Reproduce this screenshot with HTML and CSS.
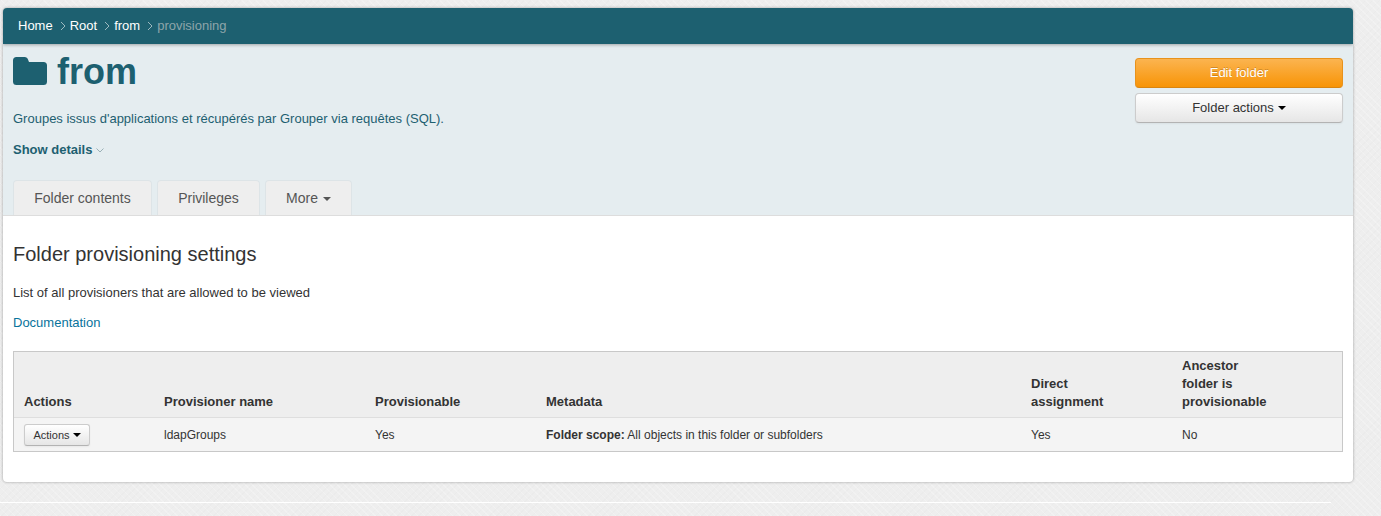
FILE: index.html
```html
<!DOCTYPE html>
<html lang="en">
<head>
<meta charset="utf-8">
<title>Folder provisioning settings</title>
<link rel="stylesheet" href="styles.css">
</head>
<body>
<main class="card">
  <nav class="crumbs">
    <a>Home</a>
    <svg class="sep" viewBox="0 0 6 10"><path d="M1 1l4 4-4 4"/></svg>
    <a>Root</a>
    <svg class="sep" viewBox="0 0 6 10"><path d="M1 1l4 4-4 4"/></svg>
    <a>from</a>
    <svg class="sep" viewBox="0 0 6 10"><path d="M1 1l4 4-4 4"/></svg>
    <span class="current">provisioning</span>
  </nav>
  <header class="head">
    <div class="head-top">
      <div class="head-main">
        <h1 class="title">
          <svg class="folder" viewBox="0 0 34 28"><path d="M3.5 0h8c2 0 3 1 3.5 2.500L16 5h14.500A3.500 3.500 0 0 1 34 8.500v16a3.500 3.500 0 0 1-3.500 3.500h-27A3.500 3.500 0 0 1 0 24.500v-21A3.500 3.500 0 0 1 3.500 0z"/></svg>
          <span>from</span>
        </h1>
        <p class="desc">Groupes issus d'applications et récupérés par Grouper via requêtes (SQL).</p>
        <p class="details"><b>Show details</b><svg class="chev" viewBox="0 0 8 5"><path d="M.5.500L4 4 7.500.500"/></svg></p>
      </div>
      <div class="head-actions">
        <button class="btn btn-orange">Edit folder</button>
        <button class="btn btn-grey">Folder actions<i class="caret"></i></button>
      </div>
    </div>
    <ul class="tabs">
      <li class="tab tab-1">Folder contents</li>
      <li class="tab tab-2">Privileges</li>
      <li class="tab tab-3">More<i class="caret caret-muted"></i></li>
    </ul>
  </header>
  <section class="content">
    <h2 class="section-title">Folder provisioning settings</h2>
    <p class="lead">List of all provisioners that are allowed to be viewed</p>
    <p class="doc"><a>Documentation</a></p>
    <table class="grid">
      <colgroup>
        <col class="c1"><col class="c2"><col class="c3"><col class="c4"><col class="c5"><col class="c6">
      </colgroup>
      <thead>
        <tr>
          <th>Actions</th>
          <th>Provisioner name</th>
          <th>Provisionable</th>
          <th>Metadata</th>
          <th>Direct<br>assignment</th>
          <th>Ancestor<br>folder is<br>provisionable</th>
        </tr>
      </thead>
      <tbody>
        <tr>
          <td><button class="btn-mini">Actions<i class="caret caret-small"></i></button></td>
          <td>ldapGroups</td>
          <td>Yes</td>
          <td><b>Folder scope:</b> All objects in this folder or subfolders</td>
          <td>Yes</td>
          <td>No</td>
        </tr>
      </tbody>
    </table>
  </section>
</main>
<footer class="foot"></footer>
</body>
</html>
```
FILE: styles.css
```css
* { box-sizing: border-box; }
html, body { height: 100%; }
body {
  margin: 0;
  padding: 8px 0 0;
  overflow: hidden;
  font-family: "Liberation Sans", Arial, sans-serif;
  font-size: 13px;
  line-height: 18px;
  color: #333;
  background-color: #eeeeee;
  background-image:
    repeating-linear-gradient(45deg, rgba(255,255,255,.22) 0 1px, transparent 1px 5px),
    repeating-linear-gradient(-45deg, rgba(0,0,0,.012) 0 1px, transparent 1px 5px);
}
.card {
  width: 1350px;
  height: 474px;
  margin-left: 3px;
  background: #fff;
  border-radius: 4px;
  box-shadow: 0 0 3px rgba(0,0,0,.35);
  overflow: hidden;
}
.crumbs {
  display: flex;
  align-items: center;
  height: 36px;
  padding: 0 15px;
  background: #1d6070;
  color: #fff;
  box-shadow: 0 1px 3px rgba(0,0,0,.3);
  position: relative;
}
.sep {
  width: 6px;
  height: 10px;
  margin: 0 4px 0 7px;
  fill: none;
  stroke: #9db9c0;
  stroke-width: 1;
}
.current { color: #8ea5aa; }
.head {
  height: 172px;
  padding: 0 10px;
  background: #e5edf0;
  border-bottom: 1px solid #ddd;
  display: flex;
  flex-direction: column;
  justify-content: space-between;
}
.head-top {
  display: flex;
  justify-content: space-between;
}
.title {
  display: flex;
  align-items: center;
  gap: 10px;
  margin: 0;
  padding-top: 9px;
  height: 47px;
  font-size: 36px;
  line-height: 44px;
  font-weight: bold;
  color: #1d6070;
}
.folder {
  width: 34px;
  height: 28px;
  fill: #1d6070;
  margin-top: -2px;
}
.desc {
  margin: 19px 0 0;
  color: #1d6070;
}
.details {
  margin: 13px 0 0;
  color: #1d6070;
  display: flex;
  align-items: center;
}
.chev {
  width: 8px;
  height: 5px;
  margin: 1px 0 0 4px;
  fill: none;
  stroke: #9ab0b6;
}
.head-actions {
  width: 208px;
  margin-top: 14px;
  display: flex;
  flex-direction: column;
  gap: 5px;
}
.btn {
  display: block;
  width: 208px;
  height: 30px;
  padding: 0;
  font: inherit;
  border-radius: 4px;
}
.btn-orange {
  color: #fff;
  text-shadow: 0 -1px 0 rgba(0,0,0,.2);
  background: linear-gradient(#fbb450, #f89406);
  border: 1px solid #e8921c;
  border-bottom-color: #d98510;
}
.btn-grey {
  color: #333;
  background: linear-gradient(#fff, #e6e6e6);
  border: 1px solid #ccc;
  border-bottom-color: #b3b3b3;
  box-shadow: inset 0 1px 0 rgba(255,255,255,.2), 0 1px 2px rgba(0,0,0,.05);
}
.caret {
  display: inline-block;
  width: 0;
  height: 0;
  margin-left: 4px;
  vertical-align: 2px;
  border-top: 4px solid #000;
  border-left: 4px solid transparent;
  border-right: 4px solid transparent;
}
.caret-muted {
  margin-left: 5px;
  border-top-color: #555;
}
.caret-small { margin-left: 3px; }
.tabs {
  display: flex;
  gap: 5px;
  list-style: none;
  margin: 0;
  padding: 0;
  height: 35px;
}
.tab {
  height: 35px;
  text-align: center;
  font-size: 14px;
  line-height: 34px;
  color: #555;
  background: #eeeeee;
  border: 1px solid #dde4e7;
  border-bottom: 0;
  border-radius: 4px 4px 0 0;
}
.tab-1 { width: 139px; }
.tab-2 { width: 103px; }
.tab-3 { width: 87px; }
.content { padding: 0 10px; }
.section-title {
  margin: 25px 0 0;
  font-size: 20px;
  line-height: 27px;
  font-weight: normal;
}
.lead { margin: 16px 0 0; }
.doc { margin: 12px 0 0; color: #08739c; }
.grid {
  width: 1330px;
  margin-top: 19px;
  table-layout: fixed;
  border-collapse: separate;
  border-spacing: 0;
  border: 1px solid #c8c8c8;
  background: #f4f4f4;
}
.c1 { width: 140px; }
.c2 { width: 211px; }
.c3 { width: 171px; }
.c4 { width: 485px; }
.c5 { width: 151px; }
.grid th {
  padding: 5px 10px 6px;
  text-align: left;
  vertical-align: bottom;
  font-size: 13px;
  background: #eeeeee;
  border-bottom: 1px solid #dedede;
}
.grid td {
  height: 33px;
  padding: 0 10px;
  font-size: 12px;
  line-height: 18px;
  vertical-align: middle;
}
.btn-mini {
  display: block;
  width: 66px;
  height: 22px;
  padding: 0;
  font: 11px/18px "Liberation Sans", Arial, sans-serif;
  color: #333;
  border: 1px solid #ccc;
  border-bottom-color: #b3b3b3;
  border-radius: 3px;
  background: linear-gradient(#fff, #e6e6e6);
  box-shadow: 0 1px 2px rgba(0,0,0,.05);
}
.foot {
  width: 1331px;
  height: 1px;
  margin-top: 20px;
  background: #fff;
}
```
